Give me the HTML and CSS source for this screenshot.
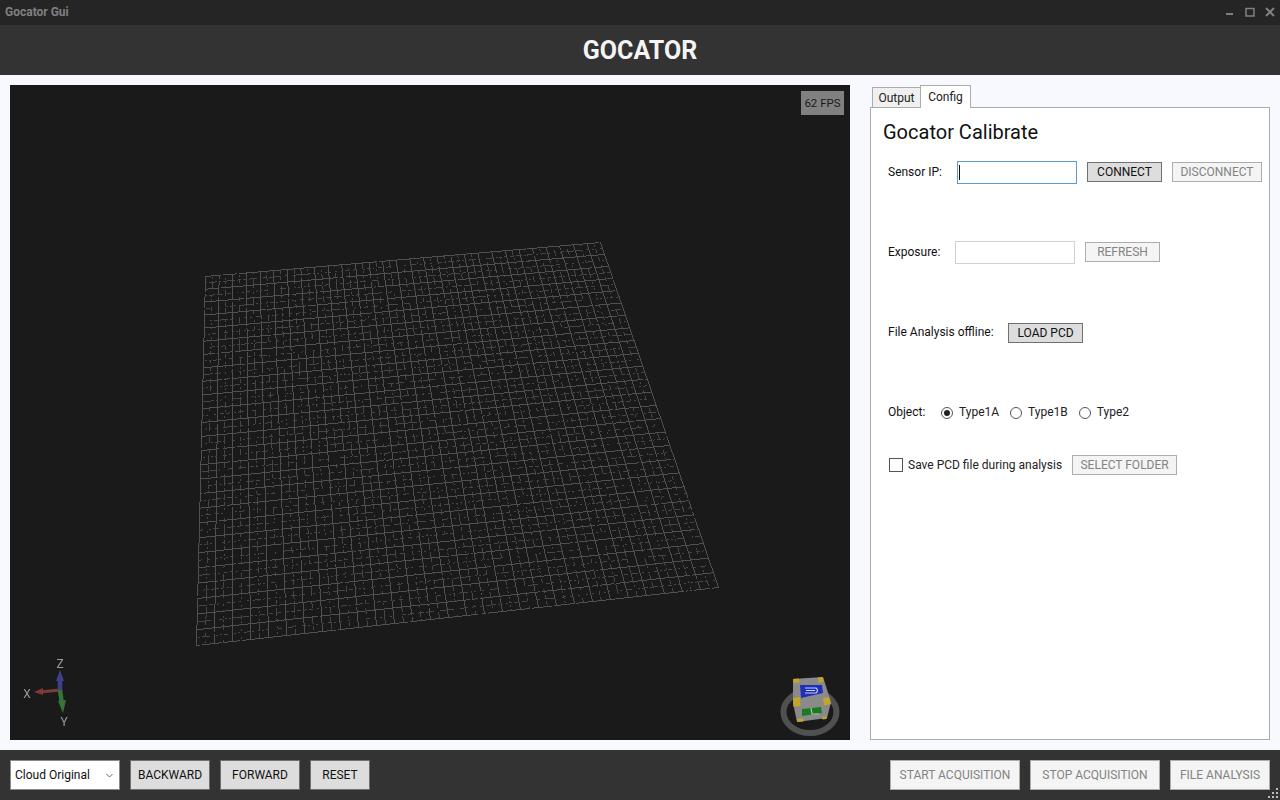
FILE: index.html

```html
<!DOCTYPE html>
<html lang="en">
<head>
  <meta charset="UTF-8" />
  <title>Gocator Gui</title>
  <link rel="stylesheet" href="styles.css">
</head>
<body>
  <div class="titlebar">
    <span class="app-name">Gocator Gui</span>
    <div class="win-buttons">
      <svg width="10" height="10" viewBox="0 0 10 10"><path d="M1 7h7" stroke="#808080" stroke-width="2"/></svg>
      <svg width="10" height="10" viewBox="0 0 10 10"><path d="M1 1.500h8v7.500h-8z" fill="none" stroke="#808080" stroke-width="1.500"/></svg>
      <svg width="10" height="10" viewBox="0 0 10 10"><path d="M1 1l8 8M9 1l-8 8" stroke="#808080" stroke-width="2"/></svg>
    </div>
  </div>
  <div class="header">GOCATOR</div>

  <div class="main">
    <div class="viewer">
      <canvas id="cloud" width="840" height="655"></canvas>
      <div class="fps">62 FPS</div>

      <svg class="axes" width="70" height="80" viewBox="0 0 70 80">
        <path d="M38 35L18 37" stroke="#7e3a3a" stroke-width="3"/>
        <path d="M12 37l9-4v7z" fill="#7e3a3a"/>
        <path d="M38 36V22" stroke="#40408a" stroke-width="4.500"/>
        <path d="M38 15l-4 11h8z" fill="#40408a"/>
        <path d="M38 35l2 14" stroke="#377537" stroke-width="4.500"/>
        <path d="M41 58l-5-12 8-1z" fill="#377537"/>
        <text x="38" y="13" class="axis-label">Z</text>
        <text x="5" y="43" class="axis-label">X</text>
        <text x="42" y="71" class="axis-label">Y</text>
      </svg>

      <svg class="cube" width="70" height="70" viewBox="0 0 70 70">
        <ellipse cx="34" cy="41" rx="26.500" ry="21" fill="none" stroke="#505050" stroke-width="6"/>
        <path d="M17 8L47 6l8 25-4 16-30 4-4-19z" fill="#8a8a8a"/>
        <path d="M24 14l22 0 1 8-22 5z" fill="#1f2fb8"/>
        <path d="M29 17h11q3 2.500 0 5h-11M30 19.500h9" fill="none" stroke="#c8d0ee" stroke-width="1.200"/>
        <path d="M26 38l19-2 1 6-20 3z" fill="#1d7a22"/>
        <path d="M35 37l1 6h7" fill="none" stroke="#a8c8a8" stroke-width="1.200"/>
        <path d="M17 8l6-.5.5 4-6 .5zM42 6.500l5-.5.500 5-5 .5zM17 27l7-1 .5 9-7 1zM47 27l6-1 2 7-7 1.500zM21 48l6-.5.5 3-6 .5zM46 46l5-.5-.5 2.500-4 .5z" fill="#c2a52c"/>
      </svg>
    </div>

    <div class="side">
      <div class="tabs">
        <div class="tab">Output</div>
        <div class="tab tab-active">Config</div>
      </div>
      <div class="panel">
        <h2 class="panel-title">Gocator Calibrate</h2>

        <div class="row row-sensor">
          <label class="lbl lbl-sensor">Sensor IP:</label>
          <div class="text-input focused"><span class="caret"></span></div>
          <button class="btn">CONNECT</button>
          <button class="btn off btn-wide">DISCONNECT</button>
        </div>

        <div class="row row-exposure">
          <label class="lbl lbl-exposure">Exposure:</label>
          <div class="text-input disabled"></div>
          <button class="btn off">REFRESH</button>
        </div>

        <div class="row row-file">
          <label class="lbl lbl-file">File Analysis offline:</label>
          <button class="btn">LOAD PCD</button>
        </div>

        <div class="row row-object">
          <label class="lbl lbl-object">Object:</label>
          <span class="radio checked"></span><span class="opt opt-a">Type1A</span>
          <span class="radio"></span><span class="opt opt-b">Type1B</span>
          <span class="radio"></span><span class="opt">Type2</span>
        </div>

        <div class="row row-save">
          <span class="check"></span>
          <span class="opt save-text">Save PCD file during analysis</span>
          <button class="btn off btn-folder">SELECT FOLDER</button>
        </div>
      </div>
    </div>
  </div>

  <div class="footer">
    <div class="footer-left">
      <div class="select">Cloud Original
        <svg class="chev" width="7" height="5" viewBox="0 0 7 5"><path d="M.5 1L3.500 4 6.500 1" fill="none" stroke="#666" stroke-width="1"/></svg>
      </div>
      <button class="btn btn-foot">BACKWARD</button>
      <button class="btn btn-foot">FORWARD</button>
      <button class="btn btn-foot btn-reset">RESET</button>
    </div>
    <div class="footer-right">
      <button class="btn btn-foot off btn-start">START ACQUISITION</button>
      <button class="btn btn-foot off btn-stop">STOP ACQUISITION</button>
      <button class="btn btn-foot off btn-analysis">FILE ANALYSIS</button>
    </div>
    <svg class="grip" width="12" height="12" viewBox="0 0 12 12">
      <path d="M9 1h2v2H9zM5 5h2v2H5zM9 5h2v2H9zM1 9h2v2H1zM5 9h2v2H5zM9 9h2v2H9z" fill="#bbb"/>
    </svg>
  </div>

  <script src="grid.js"></script>
</body>
</html>
```

FILE: styles.css

```css
* { box-sizing: border-box; }
html, body { margin: 0; height: 100%; }
body { width: 1280px; height: 800px; overflow: hidden; display: flex; flex-direction: column; font-family: Roboto, "Liberation Sans", sans-serif; font-size: 12px; color: #111; background: #f8f9ff; }

.titlebar { height: 25px; background: #252525; display: flex; align-items: center; justify-content: space-between; padding: 0 5px 2px; }
.app-name { color: #808080; font-weight: 700; font-size: 12px; }
.win-buttons { display: flex; gap: 10px; }
.header { height: 50px; background: #333; color: #f4f4f4; font-size: 25px; font-weight: 700; display: flex; align-items: center; justify-content: center; }

.main { flex: 1; display: flex; padding: 10px; gap: 20px; }
.viewer { position: relative; width: 840px; height: 655px; background: #1a1a1a; }
#cloud { display: block; }
.fps { position: absolute; top: 6px; right: 6px; width: 43px; height: 24px; background: #808080; color: #1a1a1a; font-size: 11.500px; display: flex; align-items: center; justify-content: center; }
.axes { position: absolute; left: 12px; top: 570px; }
.axis-label { fill: #9a9a9a; font-family: Roboto, sans-serif; font-size: 12px; text-anchor: middle; }
.cube { position: absolute; left: 766px; top: 586px; }

.side { width: 400px; display: flex; flex-direction: column; }
.tabs { height: 22px; display: flex; align-items: flex-end; padding-left: 2px; }
.tab { width: 49px; height: 20px; background: #f0f0f0; border: 1px solid #acacac; border-bottom: none; display: flex; align-items: center; justify-content: center; color: #222; margin-right: -1px; }
.tab-active { width: 51px; height: 23px; background: #fff; position: relative; z-index: 1; margin-bottom: -1px; }
.panel { flex: 1; background: #fff; border: 1px solid #acacac; padding: 0 0 0 12px; }
.panel-title { margin: 12px 0 0; font-size: 20px; font-weight: 400; line-height: 24px; color: #111; }

.row { display: flex; align-items: center; height: 24px; margin-left: 5px; }
.row > * { flex: none; }
.row-sensor { margin-top: 16px; }
.row-exposure { margin-top: 56px; }
.row-file { margin-top: 57px; }
.row-object { margin-top: 55px; }
.row-save { margin-top: 29px; margin-left: 6px; }

.lbl-sensor { width: 69px; }
.lbl-exposure { width: 67px; }
.lbl-file { width: 120px; padding-bottom: 2px; }
.lbl-object { width: 53px; }

.text-input { width: 120px; height: 23px; background: #fff; border: 1px solid #ccc; margin-right: 10px; display: flex; align-items: center; padding-left: 1px; }
.text-input.focused { border-color: #5b9bd5; }
.text-input.disabled { border-color: #d0d0d0; }
.caret { width: 1px; height: 15px; background: #111; }

.btn { width: 75px; height: 20px; padding: 0; margin: 0 10px 0 0; background: #ddd; border: 1px solid #707070; border-radius: 0; color: #111; font-family: inherit; font-size: 12px; }
.btn.off { background: #f4f4f4; border-color: #adadad; color: #838383; }
.btn-wide { width: 90px; }
.btn-folder { width: 105px; }

.radio { width: 12px; height: 12px; border: 1px solid #555; border-radius: 50%; background: #fff; margin: 1px 6px 0 0; display: flex; align-items: center; justify-content: center; }
.radio.checked::after { content: ""; width: 6px; height: 6px; border-radius: 50%; background: #222; }
.opt { color: #222; }
.opt-a { margin-right: 11px; }
.opt-b { margin-right: 11px; }
.check { width: 14px; height: 14px; border: 1px solid #555; background: #fff; margin-right: 5px; }
.save-text { margin-right: 10px; }

.footer { height: 50px; background: #333; display: flex; align-items: center; justify-content: space-between; padding: 0 10px; position: relative; }
.footer-left, .footer-right { display: flex; gap: 10px; }
.select { width: 110px; height: 30px; background: #fff; border: 1px solid #8a8a8a; display: flex; align-items: center; justify-content: space-between; padding: 0 6px 0 4px; color: #111; }
.btn-foot { width: 80px; height: 30px; margin: 0; }
.btn-reset { width: 60px; }
.btn-start { width: 130px; }
.btn-stop { width: 130px; }
.btn-analysis { width: 100px; }
.grip { position: absolute; right: 1px; bottom: 1px; }
```

FILE: grid.js

```js
// point cloud mesh, drawn without antialiasing like the GL viewport
var cv = document.getElementById('cloud');
var ctx = cv.getContext('2d');
var tl = [195, 191], tr = [590, 157], br = [708, 502], bl = [186, 560];
var colCells = 58, rowCells = 52;

function corner(u, v) {
  // perspective weight, far edge is the top one
  var w = v / (v + (1 - v) * 1.12);
  var lx = tl[0] + (bl[0] - tl[0]) * w, ly = tl[1] + (bl[1] - tl[1]) * w;
  var rx = tr[0] + (br[0] - tr[0]) * w, ry = tr[1] + (br[1] - tr[1]) * w;
  return [lx + (rx - lx) * u, ly + (ry - ly) * u];
}

function noise(x, y) {
  var k = Math.sin(x * 12.9898 + y * 78.233) * 43758.5453;
  return k - Math.floor(k);
}

// every other scan line is solid, the ones between come out broken up
function line(a, b, solid) {
  var n = Math.ceil(Math.max(Math.abs(b[0] - a[0]), Math.abs(b[1] - a[1])));
  var seed = a[0] + a[1];
  for (var i = 0; i <= n; i++) {
    var t = i / n;
    var x = a[0] + (b[0] - a[0]) * t, y = a[1] + (b[1] - a[1]) * t;
    var run = noise(Math.floor(i / 2), seed);
    if (solid ? run > 0.03 : run > 0.5) {
      ctx.fillStyle = solid ? '#505050' : '#464646';
      ctx.fillRect(Math.round(x), Math.round(y), 1, 1);
    }
  }
}

for (var i = 0; i <= colCells; i++) {
  line(corner(i / colCells, 0), corner(i / colCells, 1), i % 2 == 0);
}
for (var j = 0; j <= rowCells; j++) {
  line(corner(0, j / rowCells), corner(1, j / rowCells), j % 2 == 0);
}
```
